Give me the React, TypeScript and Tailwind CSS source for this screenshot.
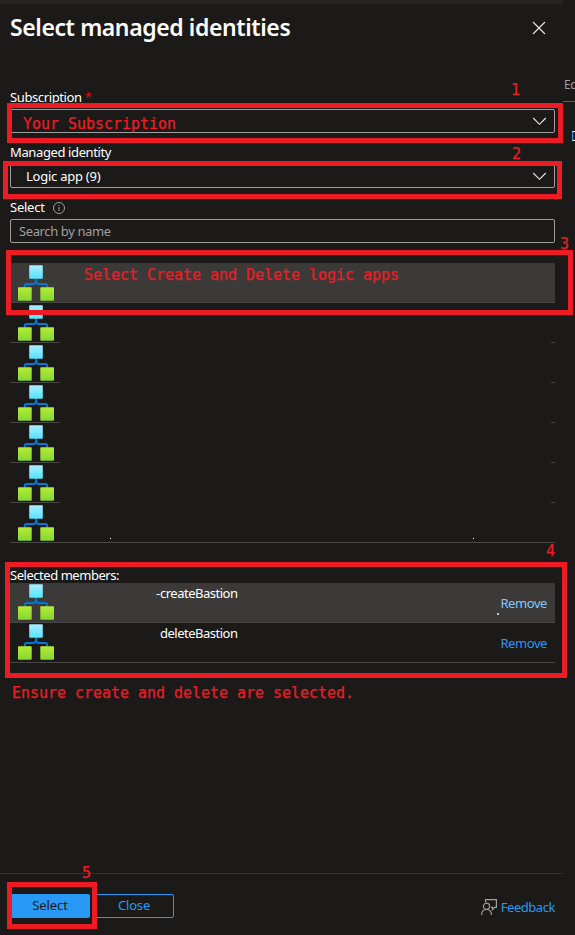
import type { ReactNode } from 'react';

function LogicAppIcon() {
  return (
    <svg className="block h-9 w-9 shrink-0" viewBox="0 0 36 36">
      <defs>
        <linearGradient id="node-root" x1="0" y1="0" x2="0" y2="1">
          <stop offset="0" stopColor="#a5edff" />
          <stop offset="0.25" stopColor="#98eaff" />
          <stop offset="1" stopColor="#50e6ff" />
        </linearGradient>
        <linearGradient id="node-leaf" x1="0" y1="0" x2="0" y2="1">
          <stop offset="0" stopColor="#b4ec36" />
          <stop offset="1" stopColor="#86d633" />
        </linearGradient>
      </defs>
      <path
        d="M18 13.5V16Q18 19 15 19H8.7Q6.8 19 6.8 20.8V23M18 16Q18 19 21 19H27.3Q29.2 19 29.2 20.8V23"
        fill="none"
        stroke="#0078d4"
        strokeWidth="1.9"
      />
      <rect x="11.2" y="0.2" width="13.6" height="13.6" rx="0.7" fill="url(#node-root)" />
      <rect x="0" y="22.2" width="13.7" height="13.6" rx="0.7" fill="url(#node-leaf)" />
      <rect x="22.3" y="22.2" width="13.7" height="13.6" rx="0.7" fill="url(#node-leaf)" />
    </svg>
  );
}

function Chevron() {
  return (
    <svg className="block h-[9px] w-[15px]" viewBox="0 0 15 9">
      <path d="M1.2 1L7.5 7.3L13.8 1" fill="none" stroke="#e8e6e4" strokeWidth="1.15" />
    </svg>
  );
}

function Callout({ className }: { className: string }) {
  return <div className={`absolute border-[5px] border-[#ed1c24] ${className}`} />;
}

function Note({ className, children }: { className: string; children: ReactNode }) {
  return (
    <div
      className={`absolute whitespace-pre font-['DejaVu_Sans_Mono',monospace] text-[15px] leading-[18px] tracking-[-0.03px] text-[#ed1c24] [-webkit-text-stroke:0.25px_#ed1c24] ${className}`}
    >
      {children}
    </div>
  );
}

function Member({ name, dash, active }: { name: string; dash?: boolean; active?: boolean }) {
  return (
    <div
      className={`flex h-10 border-b border-[#484644] pl-2 pr-2 pt-px ${active ? 'bg-[#3b3a39]' : ''}`}
    >
      <LogicAppIcon />
      <div className="ml-[102px] flex h-[18px] w-[200px] tracking-[-0.5px]">
        <span className="w-[4px]">{dash ? '-' : ''}</span>
        <span>{name}</span>
      </div>
      <a
        className={`ml-auto mt-[10px] h-[18px] tracking-[-0.42px] ${active ? 'text-[#82c7ff]' : 'text-[#2899f5]'}`}
      >
        Remove
      </a>
    </div>
  );
}

export default function App() {
  return (
    <div className="relative flex h-[935px] w-[575px] overflow-hidden bg-[#1b1a19] font-['Noto_Sans',sans-serif] text-[13px] leading-[18px] tracking-[-0.38px] text-white">
      <div className="flex w-[563px] flex-col">
        <div className="h-1 bg-[#252423]" />
        <header className="flex h-[84px] items-start justify-between pl-[10px] pr-[17px] pt-[7px]">
          <h1 className="text-[23px] font-semibold leading-8 tracking-[-0.4px]">Select managed identities</h1>
          <svg className="mt-[10px] block h-[14px] w-[14px]" viewBox="0 0 14 14">
            <path d="M1 1L13 13M13 1L1 13" stroke="#e8e6e4" strokeWidth="1.15" />
          </svg>
        </header>

        <main className="flex flex-1 flex-col pl-[10px] pr-2">
          <label className="h-[21px]">
            Subscription <span className="text-[#d0111f]">*</span>
          </label>
          <div className="flex h-6 items-center justify-end rounded-[2px] border border-[#a19f9d] pr-[7px]">
            <Chevron />
          </div>
          <label className="mt-[10px] h-[21px]">Managed identity</label>
          <div className="flex h-6 items-center justify-between rounded-[2px] border border-[#a19f9d] pl-[15px] pr-[7px]">
            <span className="tracking-[-0.25px]">Logic app (9)</span>
            <Chevron />
          </div>
          <label className="mt-[10px] flex h-[21px] tracking-[-0.25px]">
            Select
            <svg className="ml-2 mt-[4px] block h-3 w-3" viewBox="0 0 12 12">
              <circle cx="6" cy="6" r="5.5" fill="none" stroke="#a19f9d" />
              <path d="M6 5V9M6 3V4" stroke="#a19f9d" />
            </svg>
          </label>
          <div className="flex h-6 items-center rounded-[2px] border border-[#a19f9d] pl-2 text-[#a19f9d]">
            Search by name
          </div>

          <div className="mt-5 flex flex-col">
            <div className="h-10 border-b border-[#484644] bg-[#3b3a39] pl-2 pt-[2px]">
              <LogicAppIcon />
            </div>
            {[1, 2, 3, 4, 5].map((row) => (
              <div key={row} className="flex h-10 justify-between">
                <div className="w-[50px] border-b border-[#484644] pl-2 pt-[2px]">
                  <LogicAppIcon />
                </div>
                <div className="w-1 border-b border-[#484644]" />
              </div>
            ))}
            <div className="flex h-10 border-b border-[#484644] pl-2 pt-[2px]">
              <LogicAppIcon />
              <i className="ml-[56px] mt-[33px] h-px w-px bg-white" />
              <i className="ml-[362px] mt-[33px] h-px w-px bg-white" />
            </div>
          </div>

          <div className="mt-[23px] h-[17px] tracking-[-0.46px]">Selected members:</div>
          <Member name="createBastion" dash active />
          <Member name="deleteBastion" />
        </main>

        <footer className="flex h-[62px] items-start border-t border-[#323130] pl-[10px] pr-2 pt-5">
          <button className="h-6 w-20 rounded-[2px] bg-[#2899f5] pb-[2px] leading-[22px] tracking-[-0.1px] text-[#1b1a19]">
            Select
          </button>
          <button className="ml-[4px] h-6 w-20 rounded-[2px] border border-[#2899f5] pb-[2px] leading-5 tracking-[-0.15px] text-[#2899f5]">
            Close
          </button>
          <div className="ml-auto mt-1 flex tracking-[-0.45px] text-[#2899f5]">
            <svg className="mr-1 mt-px block h-4 w-4" viewBox="0 0 16 16" fill="none" stroke="#a19f9d" strokeWidth="1.2">
              <path d="M4.5 3V0.6H15.4V8.4H13.5L11.5 10.5V8.4H10" />
              <circle cx="5.5" cy="7.3" r="3.1" />
              <path d="M0.6 16C0.6 12.5 2.6 10.5 5.5 10.5S10.4 12.5 10.4 16" />
            </svg>
            Feedback
          </div>
        </footer>
      </div>

      <aside className="flex w-3 flex-col overflow-hidden">
        <div className="h-[102px] whitespace-nowrap border-b border-[#605e5c] pl-px pt-[76px] text-[12px] text-[#a19f9d]">
          Ed
        </div>
        <div className="ml-[9px] mt-[29px] h-[10px] w-[6px] border border-l-[#2899f5] border-y-white bg-[#4a1010]" />
      </aside>

      <i className="absolute left-[497px] top-[613px] h-[2px] w-[2px] bg-[#d8c8a8]" />

      <Callout className="left-[7px] top-[103px] h-[40px] w-[556px]" />
      <Callout className="left-[3px] top-[161px] h-[38px] w-[559px]" />
      <Callout className="left-[6px] top-[250px] h-[65px] w-[567px]" />
      <Callout className="left-[5px] top-[562px] h-[116px] w-[562px]" />
      <Callout className="left-[7px] top-[882px] h-[47px] w-[90px]" />

      <Note className="left-[23px] top-[115px]">Your Subscription</Note>
      <Note className="left-[84px] top-[266px]">Select Create and Delete logic apps</Note>
      <Note className="left-[12px] top-[684px]">Ensure create and delete are selected.</Note>
      <Note className="left-[511px] top-[81px]">1</Note>
      <Note className="left-[512px] top-[145px]">2</Note>
      <Note className="left-[560px] top-[235px]">3</Note>
      <Note className="left-[546px] top-[542px]">4</Note>
      <Note className="left-[82px] top-[864px]">5</Note>
    </div>
  );
}
